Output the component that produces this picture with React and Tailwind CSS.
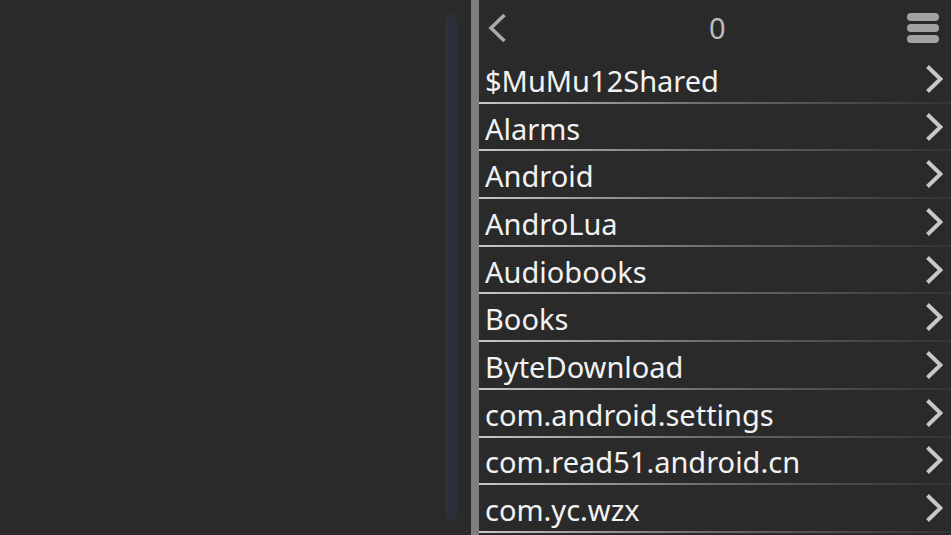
import React from 'react';

const folders = [
  '$MuMu12Shared',
  'Alarms',
  'Android',
  'AndroLua',
  'Audiobooks',
  'Books',
  'ByteDownload',
  'com.android.settings',
  'com.read51.android.cn',
  'com.yc.wzx',
];

function Chevron({ dir = 'right', className = '' }) {
  return (
    <svg viewBox="0 0 18 30" className={className} fill="none">
      {dir === 'right' ? (
        <path d="M2.5 2.5 L15.5 15 L2.5 27.5" stroke="currentColor" strokeWidth="4" strokeLinecap="butt" strokeLinejoin="miter" />
      ) : (
        <path d="M16 2 L2.5 15 L16 28" stroke="currentColor" strokeWidth="3.6" strokeLinecap="butt" strokeLinejoin="miter" />
      )}
    </svg>
  );
}

export default function App() {
  return (
    <div
      className="flex h-[535px] w-[951px] overflow-hidden bg-[#2a2a2a]"
      style={{ fontFamily: '"Noto Sans", "Open Sans", sans-serif' }}
    >
      {/* left pane */}
      <div className="flex w-[471px] shrink-0 justify-end pt-[14px] pb-[15px] pr-[14px]">
        <div className="w-[12px] rounded-full bg-[#2b303a]" />
      </div>

      {/* divider */}
      <div className="w-[8px] shrink-0 bg-[#7f7f7f]" />

      {/* file list */}
      <div className="flex min-w-0 flex-1 flex-col">
        <div className="relative flex h-[56px] shrink-0 items-center justify-between pl-[9px] pr-[12px]">
          <Chevron dir="left" className="h-[30px] w-[19px] text-[#a9a9a9]" />
          <span className="absolute left-[230px] top-[8px] text-[29px] leading-[40px] text-[#bdbdbd]">0</span>
          <div className="flex w-[32px] flex-col gap-[3px]">
            <div className="h-[8px] rounded-full bg-[#a2a2a2]" />
            <div className="h-[8px] rounded-full bg-[#a2a2a2]" />
            <div className="h-[8px] rounded-full bg-[#a2a2a2]" />
          </div>
        </div>

        {folders.map((name) => (
          <div key={name} className="flex h-[47.7px] shrink-0 flex-col">
            <div className="flex flex-1 items-center justify-between pl-[6px] pr-[8px]">
              <span className="pt-[3px] text-[29px] leading-none text-[#f2f2f2]">{name}</span>
              <Chevron className="h-[30px] w-[18px] text-[#c8c8c8]" />
            </div>
            <div className="h-[2px] bg-gradient-to-r from-[#c8c8c8] via-[#6a6a6a] to-[#333333]" />
          </div>
        ))}
      </div>
    </div>
  );
}
